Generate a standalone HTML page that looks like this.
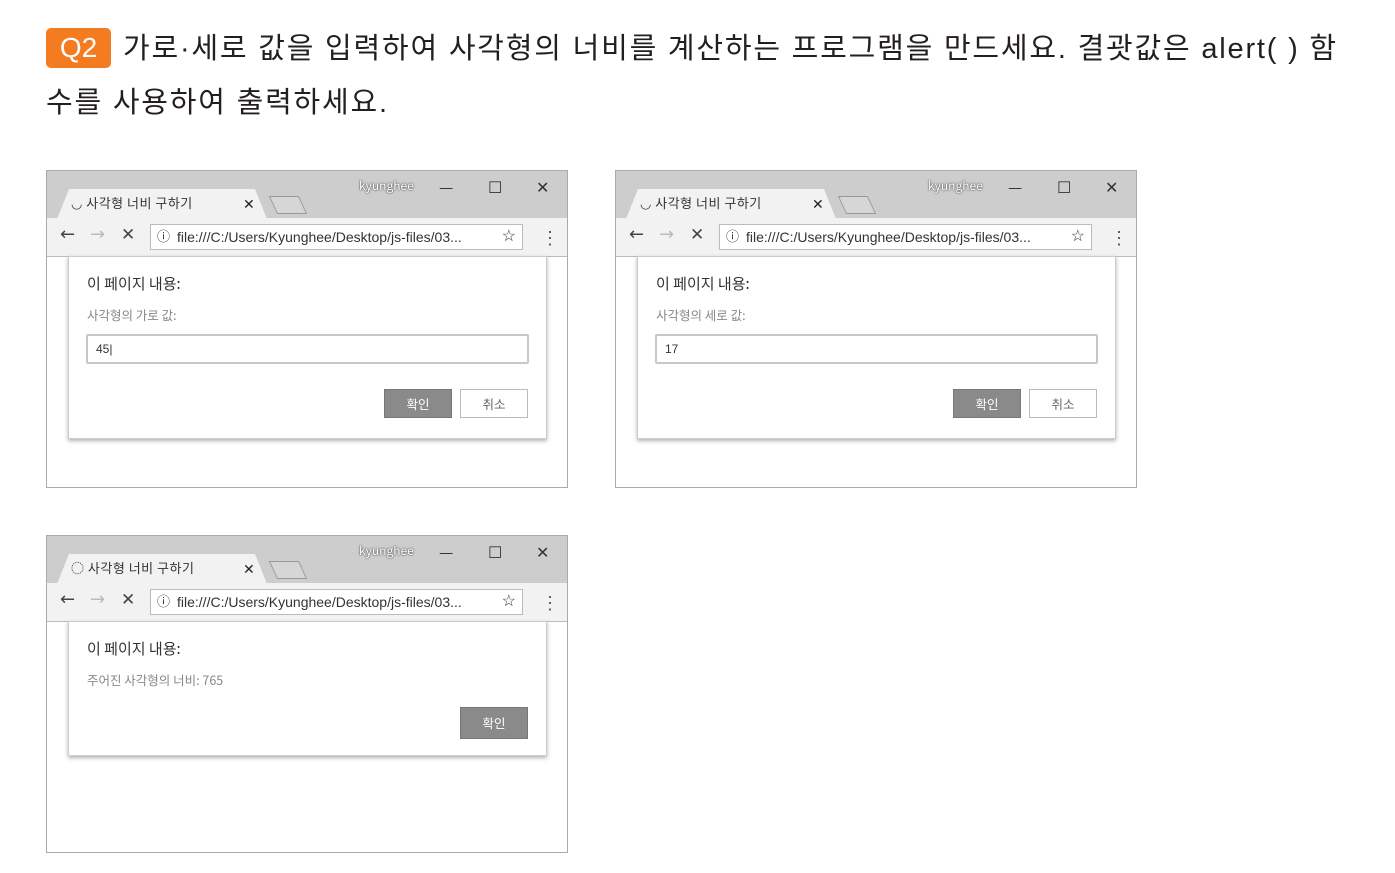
<!DOCTYPE html>
<html><head><meta charset="utf-8"><style>
body{margin:0;width:1395px;height:873px;background:#fff;position:relative;overflow:hidden;font-family:"Liberation Sans","Noto Sans CJK KR",sans-serif;}
.t{position:absolute;left:46px;top:22px;font-size:29px;color:#231f20;line-height:54px;width:1340px;letter-spacing:1.8px;white-space:nowrap}
.q{display:inline-block;background:#f47b20;color:#fff;border-radius:5px;width:65px;height:40px;line-height:40px;text-align:center;margin-right:12px;font-size:28px;vertical-align:1px;letter-spacing:0}
.w{position:absolute;width:520px;height:316px;border:1px solid #aaa;background:#fff;overflow:hidden;font-family:"Noto Sans CJK KR",sans-serif}
.tb{position:absolute;left:0;top:0;width:100%;height:47px;background:#cdcdcd}
.tab{position:absolute;left:10px;top:18px;width:210px;height:30px;background:#f2f2f2;clip-path:polygon(0 100%,12px 0,calc(100% - 12px) 0,100% 100%)}
.tabt{position:absolute;left:24px;top:22px;font-size:13px;color:#333;letter-spacing:0.5px}
.tx{position:absolute;left:196px;top:23px;font-size:14px;color:#222}
.nt{position:absolute;left:226px;top:25px;width:28px;height:16px;border:1px solid #999;background:#d6d6d6;transform:skewX(25deg)}
.usr{position:absolute;left:312px;top:6px;font-size:12px;color:#fff;text-shadow:0 0 2px #555,0 0 1px #333}
.ctl{position:absolute;top:3px;font-size:16px;color:#333}
.bar{position:absolute;left:0;top:47px;width:100%;height:38px;background:#f2f2f2;border-bottom:1px solid #bbb}
.om{position:absolute;left:103px;top:6px;width:373px;height:26px;background:#fff;border:1px solid #bbb;box-sizing:border-box;font-family:"Liberation Sans",sans-serif;font-size:14px;color:#333;line-height:24px;padding-left:26px}
.dl{position:absolute;left:21px;top:85px;width:477px;height:181px;background:#fff;border:1px solid #ccc;box-shadow:0 2px 4px rgba(0,0,0,.3)}
.h{position:absolute;left:18px;top:16px;font-size:15px;color:#333}
.lb{position:absolute;left:18px;top:48px;font-size:12.5px;color:#888}
.in{position:absolute;left:17px;top:77px;width:443px;height:30px;border:2px solid #c8c8c8;border-radius:2px;box-sizing:border-box;font-size:12px;line-height:26px;padding-left:8px;color:#333;font-family:"Liberation Sans",sans-serif}
.b{position:absolute;width:68px;height:29px;box-sizing:border-box;text-align:center;font-size:12.5px;line-height:27px}
.ok{background:#8a8a8a;color:#fff;border:1px solid #777}
.cn{background:#fff;color:#666;border:1px solid #bbb}
.ic{position:absolute;font-family:"DejaVu Sans",sans-serif}
</style></head><body>
<div class="t"><span class="q">Q2</span>가로·세로 값을 입력하여 사각형의 너비를 계산하는 프로그램을 만드세요. 결괏값은 alert( ) 함<br>수를 사용하여 출력하세요.</div>

<div class="w" style="left:46px;top:170px">
<div class="tb"><div class="tab"></div><div class="tabt">◡ 사각형 너비 구하기</div><div class="tx">✕</div><div class="nt"></div><div class="usr">kyunghee</div><div class="ctl" style="left:392px">—</div><div class="ctl" style="left:441px">☐</div><div class="ctl" style="left:489px">✕</div></div>
<div class="bar"><span class="ic" style="left:13px;top:6px;font-size:18px;color:#444">←</span><span class="ic" style="left:43px;top:6px;font-size:18px;color:#bbb">→</span><span class="ic" style="left:74px;top:7px;font-size:17px;color:#444">✕</span><div class="om"><span style="position:absolute;left:6px;font-size:13px">ⓘ</span>file:///C:/Users/Kyunghee/Desktop/js-files/03...<span style="position:absolute;right:6px;font-size:16px">☆</span></div><span style="position:absolute;left:494px;top:6px;font-size:18px;color:#555">⋮</span></div>
<div class="dl"><div class="h">이 페이지 내용:</div><div class="lb">사각형의 가로 값:</div><div class="in">45|</div><div class="b ok" style="left:315px;top:132px">확인</div><div class="b cn" style="left:391px;top:132px">취소</div></div>
</div>

<div class="w" style="left:615px;top:170px">
<div class="tb"><div class="tab"></div><div class="tabt">◡ 사각형 너비 구하기</div><div class="tx">✕</div><div class="nt"></div><div class="usr">kyunghee</div><div class="ctl" style="left:392px">—</div><div class="ctl" style="left:441px">☐</div><div class="ctl" style="left:489px">✕</div></div>
<div class="bar"><span class="ic" style="left:13px;top:6px;font-size:18px;color:#444">←</span><span class="ic" style="left:43px;top:6px;font-size:18px;color:#bbb">→</span><span class="ic" style="left:74px;top:7px;font-size:17px;color:#444">✕</span><div class="om"><span style="position:absolute;left:6px;font-size:13px">ⓘ</span>file:///C:/Users/Kyunghee/Desktop/js-files/03...<span style="position:absolute;right:6px;font-size:16px">☆</span></div><span style="position:absolute;left:494px;top:6px;font-size:18px;color:#555">⋮</span></div>
<div class="dl"><div class="h">이 페이지 내용:</div><div class="lb">사각형의 세로 값:</div><div class="in">17</div><div class="b ok" style="left:315px;top:132px">확인</div><div class="b cn" style="left:391px;top:132px">취소</div></div>
</div>

<div class="w" style="left:46px;top:535px">
<div class="tb"><div class="tab"></div><div class="tabt">◌ 사각형 너비 구하기</div><div class="tx">✕</div><div class="nt"></div><div class="usr">kyunghee</div><div class="ctl" style="left:392px">—</div><div class="ctl" style="left:441px">☐</div><div class="ctl" style="left:489px">✕</div></div>
<div class="bar"><span class="ic" style="left:13px;top:6px;font-size:18px;color:#444">←</span><span class="ic" style="left:43px;top:6px;font-size:18px;color:#bbb">→</span><span class="ic" style="left:74px;top:7px;font-size:17px;color:#444">✕</span><div class="om"><span style="position:absolute;left:6px;font-size:13px">ⓘ</span>file:///C:/Users/Kyunghee/Desktop/js-files/03...<span style="position:absolute;right:6px;font-size:16px">☆</span></div><span style="position:absolute;left:494px;top:6px;font-size:18px;color:#555">⋮</span></div>
<div class="dl" style="height:133px"><div class="h">이 페이지 내용:</div><div class="lb">주어진 사각형의 너비: 765</div><div class="b ok" style="left:391px;top:85px;height:32px;line-height:30px">확인</div></div>
</div>
</body></html>
